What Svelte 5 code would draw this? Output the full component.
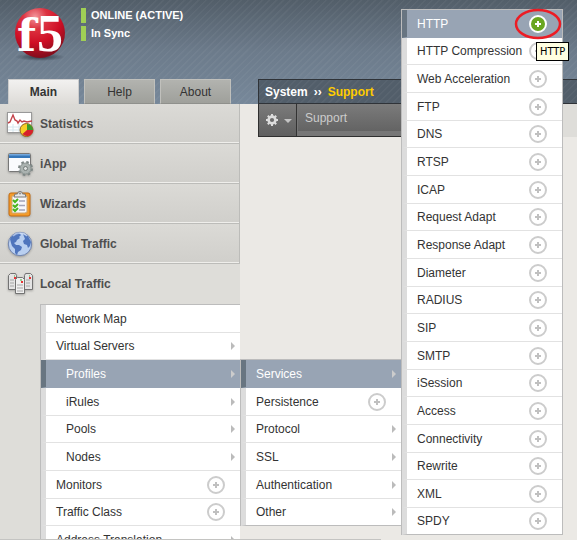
<script>
  const sections = [
    { label: 'Statistics', icon: 'stats' },
    { label: 'iApp', icon: 'iapp' },
    { label: 'Wizards', icon: 'wizards' },
    { label: 'Global Traffic', icon: 'globe' },
    { label: 'Local Traffic', icon: 'servers', open: true }
  ];

  const localTraffic = [
    { label: 'Network Map' },
    { label: 'Virtual Servers', more: true },
    { label: 'Profiles', more: true, child: true, active: true },
    { label: 'iRules', more: true, child: true },
    { label: 'Pools', more: true, child: true },
    { label: 'Nodes', more: true, child: true },
    { label: 'Monitors', add: true },
    { label: 'Traffic Class', add: true },
    { label: 'Address Translation', more: true }
  ];

  const profiles = [
    { label: 'Services', more: true, active: true },
    { label: 'Persistence', add: true },
    { label: 'Protocol', more: true },
    { label: 'SSL', more: true },
    { label: 'Authentication', more: true },
    { label: 'Other', more: true }
  ];

  const services = [
    'HTTP', 'HTTP Compression', 'Web Acceleration', 'FTP', 'DNS', 'RTSP', 'ICAP',
    'Request Adapt', 'Response Adapt', 'Diameter', 'RADIUS', 'SIP', 'SMTP', 'iSession',
    'Access', 'Connectivity', 'Rewrite', 'XML', 'SPDY'
  ].map((label, i) => ({ label, add: true, active: i === 0 }));
</script>

{#snippet menu(items, kind)}
  <ul class="menu {kind}">
    {#each items as item}
      <li class:active={item.active} class:child={item.child}>
        <a href="#menu">{item.label}</a>
        {#if item.add}
          <button class="add" aria-label="Create {item.label}">
            <svg width="18" height="18" viewBox="0 0 18 18">
              <circle class="ring" cx="9" cy="9" r="8" />
              <path class="plus" d="M9 6v6M6 9h6" />
            </svg>
          </button>
        {/if}
        {#if item.more}<span class="more"></span>{/if}
      </li>
    {/each}
  </ul>
{/snippet}

{#snippet icon(name)}
  <svg class="icon" width="28" height="28" viewBox="0 0 28 28" aria-hidden="true">
    {#if name === 'stats'}
      <rect x="1.5" y="2.5" width="24" height="20" fill="#fff" stroke="#999" />
      <path d="M2 17h23M2 20h23M7 14v8M13 14v8M19 14v8" stroke="#d5e6ee" />
      <path d="M2 13l2-1 3-7 2 5 2 1 1 2 2-3 2 2 2-1 3 1 5-1" fill="none" stroke="#c3434a" stroke-width="1.4" />
      <circle cx="20.500" cy="20" r="6.500" fill="#f5cf27" stroke="#92631d" />
      <path d="M21 20V14a6 6 0 0 1 6 6z" fill="#3c9c2c" />
      <path d="M21 20h6a6 6 0 0 1-10.500 4z" fill="#d6202c" />
    {:else if name === 'iapp'}
      <rect x="2.500" y="3.500" width="22" height="18" rx="1" fill="#fafbfd" stroke="#777" />
      <path d="M3 4h21v4H3z" fill="#3476b9" />
      <path d="M3 4h21v1.500H3z" fill="#74a8dc" />
      <circle cx="19.500" cy="18.500" r="6.300" fill="none" stroke="#7d8685" stroke-width="2.400" stroke-dasharray="2.500 2.450" />
      <circle cx="19.500" cy="18.500" r="5.500" fill="#aab2b0" stroke="#8b9492" />
      <circle cx="19.500" cy="18.500" r="2" fill="#dfe2e1" stroke="#737b79" />
    {:else if name === 'wizards'}
      <rect x="3" y="3" width="21" height="23" rx="2" fill="#f49c2c" stroke="#c46c12" />
      <path d="M6 6h15v16l-2 1H6z" fill="#f7f7fb" stroke="#cda773" />
      <path d="M13 11h6M13 15.500h6M13 20h6" stroke="#a2a4b8" stroke-width="1.500" />
      <path d="M7 10l2 2 3-3M7 15l2 2 3-3M7 19l2 2 3-3" fill="none" stroke="#48b51b" stroke-width="2" />
      <path d="M8 7l1-3h2.500a2.500 2.500 0 0 1 5 0H19l1 3z" fill="#e7e7e7" stroke="#777" />
      <circle cx="14" cy="3.500" r="1" fill="#888" />
    {:else if name === 'globe'}
      <circle cx="14" cy="14" r="11.700" fill="#b9cff0" stroke="#7083ad" />
      <path d="M4 9c2-4 6-6 9-6l2 2-2 2 1 1-3 2-1 2-2 1 2 2h3l3 2-1 3-3 2-1 3-2-2v-4l-3-3-1-3zM17 4l5 2 3 6-1 4-2 2-1-3-3-1-1-3 2-2z" fill="#4f75bd" />
      <path d="M7 6c4-4 10-4 14 0" fill="none" stroke="#dce8fb" stroke-width="1.500" opacity=".6" />
    {:else}
      <g fill="#e4e4e4" stroke="#737373">
        <path d="M2.500 19.500v-14l2-2h5l1 2v14zM18.500 19.500v-14l1-2h5l2 2v14z" />
        <path d="M9.500 23.500v-14l2-2h5l2 2v14z" fill="#f0f0f0" />
      </g>
      <path d="M4 10h4M4 13h4M4 16h4M20 10h4M20 13h4M20 16h4M11 15h6M11 18h6M11 21h6" stroke="#a6a6a6" />
      <path d="M8 6h1M23 6h1M14 10h2" stroke="#49ae38" />
      <path d="M8 8h2M23 8h2M15 12h2" stroke="#ea3336" stroke-width="2" />
    {/if}
  </svg>
{/snippet}

<div class="page">
  <header>
    <div class="identity">
      <svg class="logo" width="56" height="56" viewBox="0 0 56 56" role="img" aria-label="f5">
        <defs>
          <radialGradient id="ball" cx="40%" cy="18%" r="80%">
            <stop offset="0" stop-color="#f3979c" />
            <stop offset=".3" stop-color="#dc3341" />
            <stop offset=".65" stop-color="#cf0e25" />
            <stop offset="1" stop-color="#860e1d" />
          </radialGradient>
          <radialGradient id="shade">
            <stop offset="0" stop-color="#202a33" stop-opacity=".8" />
            <stop offset="1" stop-color="#202a33" stop-opacity="0" />
          </radialGradient>
        </defs>
        <ellipse cx="28" cy="50" rx="25" ry="4" fill="url(#shade)" />
        <circle cx="28" cy="26" r="25" fill="url(#ball)" />
        <text class="mark" y="44"><tspan class="eff" x="5">f</tspan><tspan class="five" x="25">5</tspan></text>
      </svg>
      <div class="status">
        <div>ONLINE (ACTIVE)</div>
        <div>In Sync</div>
      </div>
    </div>
    <nav class="tabs">
      <a class="current" href="#main">Main</a>
      <a href="#help">Help</a>
      <a href="#about">About</a>
    </nav>
  </header>

  <div class="body">
    <aside>
      {#each sections as s}
        <a class="section" class:open={s.open} href="#section">{@render icon(s.icon)}{s.label}</a>
      {/each}
      {@render menu(localTraffic, 'local')}
    </aside>
    <main>
      <div class="crumbs"><strong>System</strong><span>››</span><strong class="here">Support</strong></div>
      <div class="toolbar">
        <button class="options" aria-label="Options">
          <svg width="28" height="14" viewBox="0 0 28 14">
            <circle cx="6" cy="7" r="3.400" fill="none" stroke="#ddd" stroke-width="2.600" />
            <path d="M6 1v2M6 11v2M0 7h2M10 7h2M1.800 2.800l1.400 1.400M8.800 9.800l1.400 1.400M10.200 2.800L8.800 4.200M3.200 9.800l-1.400 1.400" stroke="#ddd" stroke-width="2" />
            <path d="M18 6h8l-4 4z" fill="#c4c4c4" />
          </svg>
        </button>
        <a href="#support">Support</a>
      </div>
    </main>
  </div>

  {@render menu(profiles, 'profiles')}
  {@render menu(services, 'services')}

  <svg class="highlight" width="48" height="32" viewBox="0 0 48 32" aria-hidden="true">
    <ellipse cx="24" cy="16" rx="22" ry="14" fill="none" stroke="#ec1c24" stroke-width="2.500" />
  </svg>
  <div class="tooltip" role="tooltip">HTTP</div>
  <div class="statusline"></div>
</div>

<style>
  :global(body) {
    margin: 0;
  }
  .page {
    position: relative;
    height: 100vh;
    overflow: hidden;
    background: #ebe9e5;
    color: #333;
    font: 12px/16px "Liberation Sans", Arial, sans-serif;
  }
  .page :global(*) {
    box-sizing: border-box;
  }
  a {
    color: inherit;
    text-decoration: none;
  }
  button {
    padding: 0;
    border: 0;
    background: none;
  }
  svg {
    display: block;
    flex: none;
  }

  header {
    display: flex;
    flex-direction: column;
    justify-content: space-between;
    height: 104px;
    background:
      repeating-linear-gradient(135deg, rgba(255, 255, 255, 0.04) 0 1px, transparent 2px 5px),
      linear-gradient(#525e69, #6c7b8b 50%, #77889a);
  }
  .identity {
    display: flex;
    gap: 13px;
    padding: 7px 12px 0;
  }
  .logo {
    overflow: visible;
  }
  .mark {
    fill: #fff;
    font-weight: bold;
  }
  .eff {
    font-family: "DejaVu Serif", serif;
    font-size: 44px;
  }
  .five {
    font-family: "Liberation Serif", serif;
    font-size: 52px;
  }
  .status {
    display: flex;
    flex-direction: column;
    gap: 3px;
    padding-top: 1px;
    color: #fff;
    font-size: 11px;
    font-weight: bold;
    line-height: 15px;
  }
  .status div {
    padding-left: 5px;
    border-left: 5px solid #a0cf55;
  }
  .tabs {
    display: flex;
    gap: 5px;
    padding-left: 8px;
  }
  .tabs a {
    width: 71px;
    height: 25px;
    border: 1px solid #c0c0bc;
    border-bottom-color: #8f908c;
    background: linear-gradient(#b2b3af, #9fa09b);
    line-height: 24px;
    text-align: center;
  }
  .tabs .current {
    border-color: #ccc;
    border-bottom: 0;
    background: linear-gradient(#f2f1f0, #dddbd7);
    font-weight: bold;
  }

  .body {
    display: flex;
    height: calc(100% - 104px);
  }
  aside {
    flex: none;
    width: 240px;
    background: #deddd9;
  }
  .section {
    display: flex;
    align-items: center;
    gap: 6px;
    height: 40px;
    padding-left: 6px;
    border-right: 1px solid #bcbcb9;
    border-bottom: 1px solid #bcbcb9;
    background: linear-gradient(#dbdad6, #d0cfcb);
    box-shadow: inset 0 -1px #efeeeb;
    color: #4f4f4f;
    font-weight: bold;
    line-height: 18px;
  }
  .section.open {
    border-color: transparent;
    background: none;
    box-shadow: none;
  }
  .icon {
    filter: drop-shadow(0 1px 1px rgba(0, 0, 0, 0.25));
  }

  main {
    flex: 1;
    margin-top: -25px;
    margin-left: 18px;
    background: linear-gradient(#deddd9, #deddd9) 0 0 / 100% 58px no-repeat;
  }
  .crumbs {
    display: flex;
    align-items: center;
    gap: 6px;
    height: 25px;
    padding-left: 6px;
    border: solid #2f3338;
    border-width: 1px 0 1px 1px;
    background:
      repeating-linear-gradient(135deg, rgba(255, 255, 255, 0.04) 0 1px, transparent 2px 5px),
      #525e6a;
    color: #fff;
  }
  .crumbs .here {
    color: #fc0;
  }
  .crumbs span {
    font-weight: bold;
  }
  .toolbar {
    display: flex;
    height: 33px;
    margin-right: 170px;
    border: solid #2f2f2f;
    border-width: 0 0 1px 1px;
    background: linear-gradient(#7b7b7b, #5f5f5f);
  }
  .options {
    width: 38px;
    padding-left: 7px;
    border-right: 1px solid #333;
  }
  .toolbar a {
    flex: 1;
    padding: 6px 7px;
    border: solid #777;
    border-width: 0 0 5px 1px;
    color: #ccc;
  }

  .menu {
    margin: 0;
    padding: 0;
    border: solid #bcbcbc;
    border-width: 1px 0 0 1px;
    background: #fff;
    list-style: none;
  }
  .menu li {
    display: flex;
    align-items: center;
    height: 28px;
    border-left: 5px solid #dcdcdc;
    border-bottom: 1px solid #e2e2e2;
  }
  .menu a {
    flex: 1;
    padding-left: 10px;
    white-space: nowrap;
  }
  .menu .child a {
    padding-left: 20px;
  }
  .menu .active {
    border-left-color: #687581;
    border-bottom-color: #98a4b4;
    background: #98a4b4;
    color: #fff;
  }
  .local li:nth-child(3n + 2),
  .profiles li:nth-child(3n),
  .services li:nth-child(3n + 2),
  .services li:last-child {
    height: 27px;
  }
  .local {
    margin-left: 40px;
  }
  .profiles,
  .services {
    position: absolute;
  }
  .profiles {
    top: 359px;
    left: 240px;
    width: 161px;
  }
  .services {
    top: 9px;
    left: 401px;
    width: 162px;
    border-right-width: 1px;
  }
  .profiles li:last-child,
  .services li:last-child {
    border-bottom-color: #bcbcbc;
  }
  .add {
    width: 18px;
    margin-right: 15px;
  }
  .ring {
    fill: none;
    stroke: #ccc;
    stroke-width: 2;
  }
  .plus {
    stroke: #c0c0c0;
    stroke-width: 2;
  }
  .active .ring {
    fill: #6aa621;
    stroke: #fff;
  }
  .active .plus {
    stroke: #fff;
  }
  .more {
    margin-right: 5px;
    border: solid transparent;
    border-width: 4px 0 4px 4px;
    border-left-color: #bbb;
  }
  .active .more {
    border-left-color: #ccc;
  }

  .highlight {
    position: absolute;
    top: 8px;
    left: 514px;
  }
  .tooltip {
    position: absolute;
    top: 42px;
    left: 536px;
    padding: 0 3px;
    border: 1px solid #000;
    background: #ffffe1;
    color: #000;
    font: 11px/17px "DejaVu Sans Condensed", Tahoma, sans-serif;
  }
  .statusline {
    position: absolute;
    bottom: 0;
    left: 0;
    width: 66%;
    height: 1px;
    background: #c4c4c2;
  }
</style>
